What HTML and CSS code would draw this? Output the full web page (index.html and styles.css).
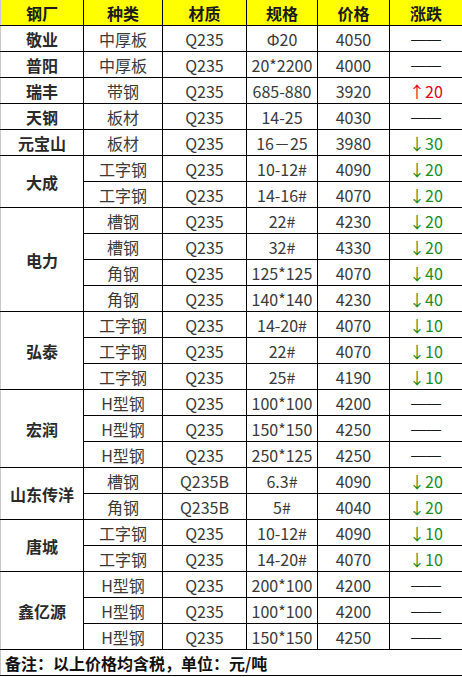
FILE: index.html
```html
<!DOCTYPE html>
<html lang="zh">
<head>
<meta charset="utf-8">
<title>钢材价格表</title>
<link rel="stylesheet" href="styles.css">
</head>
<body>
<table class="price-table">
  <colgroup>
    <col class="c-mill">
    <col class="c-kind">
    <col class="c-grade">
    <col class="c-spec">
    <col class="c-price">
    <col class="c-change">
  </colgroup>
  <thead>
    <tr class="head-row">
      <th>钢厂</th><th>种类</th><th>材质</th><th>规格</th><th>价格</th><th>涨跌</th>
    </tr>
  </thead>
  <tbody>
    <tr><td class="mill">敬业</td><td>中厚板</td><td>Q235</td><td>Φ20</td><td>4050</td><td class="flat">——</td></tr>
    <tr><td class="mill">普阳</td><td>中厚板</td><td>Q235</td><td>20*2200</td><td>4000</td><td class="flat">——</td></tr>
    <tr><td class="mill">瑞丰</td><td>带钢</td><td>Q235</td><td>685-880</td><td>3920</td><td class="up">↑20</td></tr>
    <tr><td class="mill">天钢</td><td>板材</td><td>Q235</td><td>14-25</td><td>4030</td><td class="flat">——</td></tr>
    <tr><td class="mill">元宝山</td><td>板材</td><td>Q235</td><td>16－25</td><td>3980</td><td class="down">↓30</td></tr>

    <tr><td class="mill" rowspan="2">大成</td><td>工字钢</td><td>Q235</td><td>10-12#</td><td>4090</td><td class="down">↓20</td></tr>
    <tr><td>工字钢</td><td>Q235</td><td>14-16#</td><td>4070</td><td class="down">↓20</td></tr>

    <tr><td class="mill" rowspan="4">电力</td><td>槽钢</td><td>Q235</td><td>22#</td><td>4230</td><td class="down">↓20</td></tr>
    <tr><td>槽钢</td><td>Q235</td><td>32#</td><td>4330</td><td class="down">↓20</td></tr>
    <tr><td>角钢</td><td>Q235</td><td>125*125</td><td>4070</td><td class="down">↓40</td></tr>
    <tr><td>角钢</td><td>Q235</td><td>140*140</td><td>4230</td><td class="down">↓40</td></tr>

    <tr><td class="mill" rowspan="3">弘泰</td><td>工字钢</td><td>Q235</td><td>14-20#</td><td>4070</td><td class="down">↓10</td></tr>
    <tr><td>工字钢</td><td>Q235</td><td>22#</td><td>4070</td><td class="down">↓10</td></tr>
    <tr><td>工字钢</td><td>Q235</td><td>25#</td><td>4190</td><td class="down">↓10</td></tr>

    <tr><td class="mill" rowspan="3">宏润</td><td>H型钢</td><td>Q235</td><td>100*100</td><td>4200</td><td class="flat">——</td></tr>
    <tr><td>H型钢</td><td>Q235</td><td>150*150</td><td>4250</td><td class="flat">——</td></tr>
    <tr><td>H型钢</td><td>Q235</td><td>250*125</td><td>4250</td><td class="flat">——</td></tr>

    <tr><td class="mill" rowspan="2">山东传洋</td><td>槽钢</td><td>Q235B</td><td>6.3#</td><td>4090</td><td class="down">↓20</td></tr>
    <tr><td>角钢</td><td>Q235B</td><td>5#</td><td>4040</td><td class="down">↓20</td></tr>

    <tr><td class="mill" rowspan="2">唐城</td><td>工字钢</td><td>Q235</td><td>10-12#</td><td>4090</td><td class="down">↓10</td></tr>
    <tr><td>工字钢</td><td>Q235</td><td>14-20#</td><td>4070</td><td class="down">↓10</td></tr>

    <tr><td class="mill" rowspan="3">鑫亿源</td><td>H型钢</td><td>Q235</td><td>200*100</td><td>4200</td><td class="flat">——</td></tr>
    <tr><td>H型钢</td><td>Q235</td><td>100*100</td><td>4200</td><td class="flat">——</td></tr>
    <tr><td>H型钢</td><td>Q235</td><td>150*150</td><td>4250</td><td class="flat">——</td></tr>
  </tbody>
  <tfoot>
    <tr class="foot-row"><td colspan="6">备注：以上价格均含税，单位：元/吨</td></tr>
  </tfoot>
</table>
</body>
</html>
```

FILE: styles.css
```css
html, body {
  margin: 0;
  padding: 0;
  background: #ffffff;
}

.price-table {
  border-collapse: collapse;
  table-layout: fixed;
  width: 462px;
  font-family: "Noto Sans CJK SC", "Noto Sans", sans-serif;
  font-size: 16px;
  color: #3a3a3a;
}

.c-mill { width: 83px; }
.c-kind { width: 79px; }
.c-grade { width: 84px; }
.c-spec { width: 71px; }
.c-price { width: 72px; }
.c-change { width: 73px; }

.price-table th,
.price-table td {
  border: 1px solid #000;
  height: 25px;
  padding: 0;
  line-height: 24px;
  text-align: center;
  white-space: nowrap;
}

.price-table tr > :first-child {
  border-left-color: #c8c8c8;
}

.head-row th {
  border-top: none;
  background: #ffff00;
  color: #1a1a1a;
  font-weight: bold;
}

.mill {
  font-weight: bold;
  color: #2a2a2a;
}

.price-table td.flat {
  font-family: "Liberation Sans", "Noto Sans", sans-serif;
  font-size: 15px;
  color: #1a1a1a;
}

.up {
  color: #e60012;
}

.down {
  color: #1e8c1e;
}

.foot-row td {
  height: 25px;
  text-align: left;
  padding-left: 4px;
  font-weight: bold;
  color: #111;
}
```
